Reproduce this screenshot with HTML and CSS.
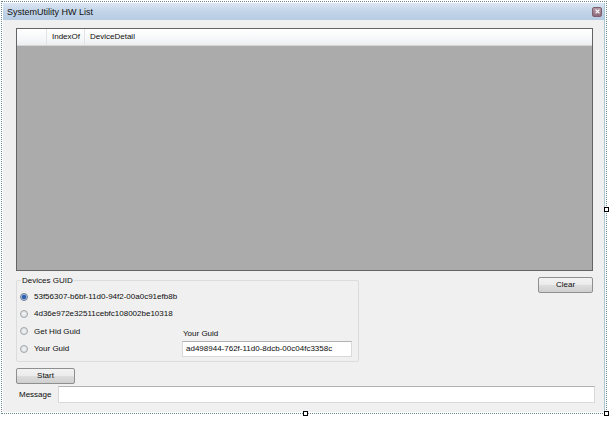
FILE: index.html
```html
<!DOCTYPE html>
<html>
<head>
<meta charset="utf-8">
<link rel="stylesheet" href="styles.css">
</head>
<body>
<div class="designer">
  <div class="window">
    <div class="titlebar">
      <span class="title">SystemUtility HW List</span>
      <span class="close"><svg width="9" height="9" viewBox="0 0 9 9"><path d="M2 2L7 7M7 2L2 7" stroke="#fff" stroke-width="1.4"/></svg></span>
    </div>
    <div class="form">
      <div class="grid">
        <div class="grid-head">
          <div class="hcell rowhead"></div>
          <div class="hcell c1">IndexOf</div>
          <div class="hcell c2">DeviceDetail</div>
        </div>
      </div>
      <div class="middle">
        <fieldset class="group">
          <legend>Devices GUID</legend>
          <div class="radios">
            <div class="radio-row"><span class="radio on"></span><span>53f56307-b6bf-11d0-94f2-00a0c91efb8b</span></div>
            <div class="radio-row"><span class="radio"></span><span>4d36e972e32511cebfc108002be10318</span></div>
            <div class="radio-row"><span class="radio"></span><span>Get Hid Guid</span></div>
            <div class="radio-row"><span class="radio"></span><span>Your Guid</span></div>
          </div>
          <div class="yourguid">
            <div class="yg-label">Your Guid</div>
            <div class="textbox yg-box">ad498944-762f-11d0-8dcb-00c04fc3358c</div>
          </div>
        </fieldset>
        <div class="btn clear">Clear</div>
      </div>
      <div class="btn start">Start</div>
      <div class="msg-row">
        <span class="msg-label">Message</span>
        <div class="textbox msg-box"></div>
      </div>
    </div>
  </div>
  <span class="handle h-right"></span>
  <span class="handle h-corner"></span>
  <span class="handle h-bottom"></span>
</div>
</body>
</html>
```
FILE: styles.css
```css
* { box-sizing: border-box; }
html, body { margin: 0; padding: 0; background: #ffffff; }
body {
  width: 612px; height: 421px; overflow: hidden;
  font-family: "Liberation Sans", Arial, sans-serif;
  font-size: 8px; color: #0d0d0d;
}
.designer {
  position: relative;
  margin: 1px 0 0 1px;
  width: 606px; height: 413px;
  border: 1px dotted #6c8a94;
  padding: 1px;
}
.window {
  width: 602px; height: 409px;
  border-right: 1px solid #a9c9d2;
  display: flex; flex-direction: column;
  background: #f0f0f0;
}
.titlebar {
  height: 17px; flex: none;
  background: linear-gradient(#dbe6f3, #c2d4e8 50%, #b6cbe3);
  display: flex; align-items: center; justify-content: space-between;
  padding: 0 2px 0 4px;
}
.title { font-size: 9px; color: #111; }
.close {
  width: 10px; height: 10px;
  background: linear-gradient(#b69aa6, #8c6a7a);
  border: 1px solid #7d6070; border-radius: 2px;
  display: flex; align-items: center; justify-content: center;
}
.close svg { display: block; width: 7px; height: 7px; }
.form {
  flex: 1;
  padding: 8px 0 0 13px;
  display: flex; flex-direction: column;
}
.grid {
  width: 577px; height: 243px;
  background: #ababab;
  border: 1px solid #646464;
}
.grid-head {
  height: 17px; display: flex;
  background: linear-gradient(#ffffff, #f6f7f8 60%, #eceef1);
  border-bottom: 1px solid #d5d5d5;
}
.hcell {
  height: 16px; line-height: 16px; padding-left: 5px;
  border-right: 1px solid #e2e3e6;
}
.rowhead { width: 30px; }
.c1 { width: 38px; }
.c2 { border-right: none; }
.middle {
  display: flex; justify-content: space-between;
  width: 577px; margin-top: 5px;
}
.group {
  margin: 0; padding: 0 5px 0 3px;
  width: 343px; height: 86px;
  border: 1px solid #dcdcdc;
  border-radius: 2px;
  display: flex;
  position: relative;
}
.group legend {
  padding: 0 1px; margin-left: 1px;
  font-size: 8px;
}
.radios {
  display: flex; flex-direction: column;
  padding-top: 3px; width: 162px;
}
.radio-row {
  height: 17.3px; display: flex; align-items: center; gap: 6px;
}
.radio {
  width: 8px; height: 8px; border-radius: 50%;
  border: 1px solid #a0a4aa;
  background: radial-gradient(circle, #f4f4f4, #d8dadd);
  flex: none;
}
.radio.on {
  background: radial-gradient(circle, #2d5fb0 0 1.8px, #8fb0dc 2.4px, #e8edf3 3.5px);
  border-color: #6f7f94;
}
.yourguid {
  display: flex; flex-direction: column;
  padding-top: 44px; margin-left: 0;
}
.yg-label { height: 12px; line-height: 10px; padding-left: 1px; }
.textbox {
  background: #ffffff;
  border: 1px solid #d9d9d9;
  border-top-color: #b2b2b2;
}
.yg-box {
  width: 170px; height: 16px; line-height: 14px; padding-left: 3px;
}
.btn {
  border: 1px solid #8e8f8f; border-radius: 2px;
  background: linear-gradient(#f2f2f2, #ebebeb 50%, #dddddd 51%, #cfcfcf);
  text-align: center; line-height: 14px; height: 16px;
}
.clear { width: 55px; margin-top: 1px; }
.start { width: 59px; margin-top: 6px; }
.msg-row {
  display: flex; align-items: center;
  margin-top: 2px; width: 579px;
}
.msg-label { width: 42px; padding-left: 3px; }
.msg-box { flex: 1; height: 17px; }
.handle {
  position: absolute; width: 5px; height: 5px;
  border: 1px solid #000; background: #fff;
}
.h-right { right: -3px; top: 205px; }
.h-corner { right: -3px; bottom: -3px; }
.h-bottom { left: 301px; bottom: -3px; }
```
